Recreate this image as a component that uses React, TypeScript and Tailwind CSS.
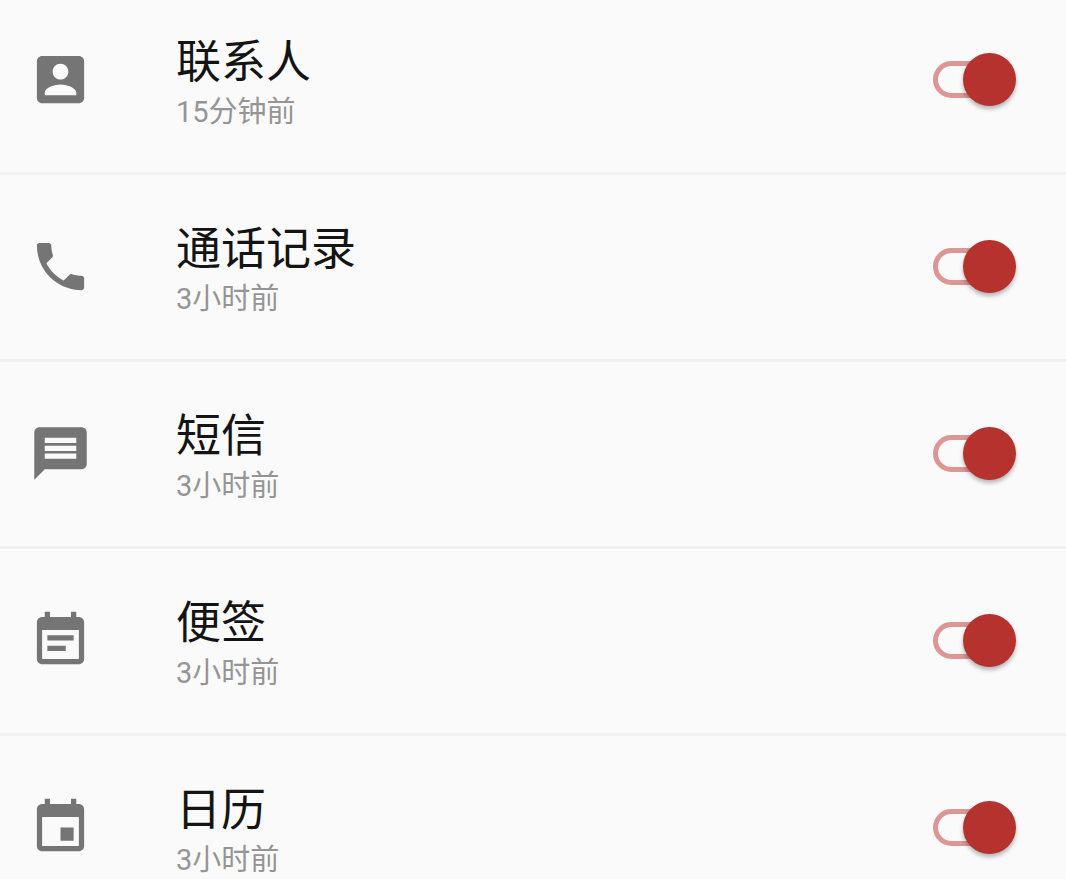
import { useId, useState } from "react";

const icons = {
  contacts:
    "M3 5v14c0 1.1.89 2 2 2h14c1.1 0 2-.9 2-2V5c0-1.1-.9-2-2-2H5c-1.11 0-2 .9-2 2zm12 4c0 1.66-1.34 3-3 3s-3-1.34-3-3 1.34-3 3-3 3 1.34 3 3zm-9 8c0-2 4-3.1 6-3.1s6 1.1 6 3.1v1H6v-1z",
  calls:
    "M6.62 10.79c1.44 2.83 3.76 5.14 6.59 6.59l2.2-2.2c.27-.27.67-.36 1.02-.24 1.12.37 2.33.57 3.57.57.55 0 1 .45 1 1V20c0 .55-.45 1-1 1-9.39 0-17-7.61-17-17 0-.55.45-1 1-1h3.5c.55 0 1 .45 1 1 0 1.25.2 2.45.57 3.57.11.35.03.74-.25 1.02l-2.2 2.2z",
  messages:
    "M20 2H4c-1.1 0-1.99.9-1.99 2L2 22l4-4h14c1.1 0 2-.9 2-2V4c0-1.1-.9-2-2-2zm-2 12H6v-2h12v2zm0-3H6V9h12v2zm0-3H6V6h12v2z",
  notes:
    "M17 10H7v2h10v-2zm2-7h-1V1h-2v2H8V1H6v2H5c-1.11 0-1.99.9-1.99 2L3 19c0 1.1.89 2 2 2h14c1.1 0 2-.9 2-2V5c0-1.1-.9-2-2-2zm0 16H5V8h14v11zm-5-5H7v2h7v-2z",
  calendar:
    "M17 12h-5v5h5v-5zM16 1v2H8V1H6v2H5c-1.11 0-1.99.9-1.99 2L3 19c0 1.1.89 2 2 2h14c1.1 0 2-.9 2-2V5c0-1.1-.9-2-2-2h-1V1h-2zm3 18H5V8h14v11z",
};

type IconName = keyof typeof icons;

const items: { icon: IconName; title: string; time: string }[] = [
  { icon: "contacts", title: "联系人", time: "15分钟前" },
  { icon: "calls", title: "通话记录", time: "3小时前" },
  { icon: "messages", title: "短信", time: "3小时前" },
  { icon: "notes", title: "便签", time: "3小时前" },
  { icon: "calendar", title: "日历", time: "3小时前" },
];

function SyncRow({ icon, title, time }: (typeof items)[number]) {
  const id = useId();
  const [on, setOn] = useState(true);
  return (
    <li className="flex h-[187px] items-center border-b-3 border-[#f1f1f1] pr-[50px] pb-[2px] pl-[29px]">
      <svg viewBox="0 0 24 24" className="size-[63px] shrink-0 fill-[#757575]" aria-hidden="true">
        <path d={icons[icon]} />
      </svg>
      <label htmlFor={id} className="ml-[84px] flex-1 pt-2.5">
        <span className="block text-[45px] leading-[56px] text-[#141414]">{title}</span>
        <span className="block text-[29px] leading-[42px] text-[#959595]">{time}</span>
      </label>
      <span className="relative flex h-[54px] w-[83px] shrink-0 items-center">
        <input
          id={id}
          type="checkbox"
          role="switch"
          checked={on}
          onChange={(e) => setOn(e.target.checked)}
          className="peer h-[37px] w-[74px] cursor-pointer appearance-none rounded-full border-5 border-[#bdbdbd] checked:border-[#dc9694]"
        />
        <span className="pointer-events-none absolute left-0 size-[53px] rounded-full bg-[#9e9e9e] shadow-[0_3px_4px_rgba(0,0,0,0.28)] peer-checked:right-0 peer-checked:left-auto peer-checked:bg-[#b5322e]" />
      </span>
    </li>
  );
}

export default function App() {
  return (
    <main className="h-screen overflow-hidden bg-[#fafafa] font-[Roboto,'Noto_Sans_CJK_SC',sans-serif]" lang="zh-CN">
      <ul className="-mt-3">
        {items.map((item) => (
          <SyncRow key={item.title} {...item} />
        ))}
      </ul>
    </main>
  );
}
